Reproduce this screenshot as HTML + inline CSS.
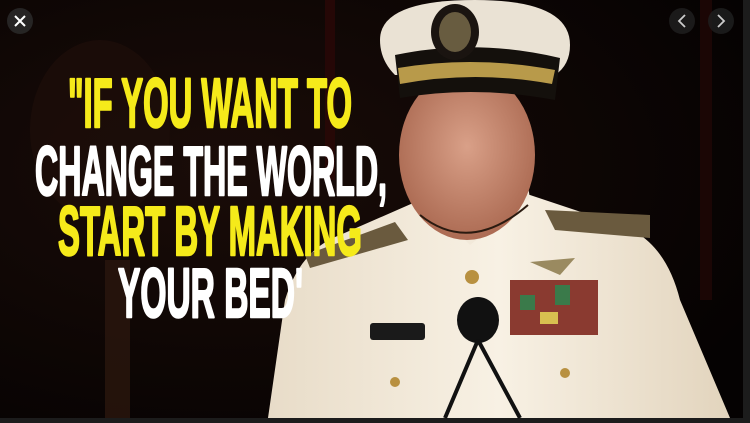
<!DOCTYPE html>
<html><head><meta charset="utf-8"><style>
html,body{margin:0;padding:0;background:#1c1c1c;width:750px;height:423px;overflow:hidden}
svg{display:block}
</style></head><body>
<svg width="750" height="423" viewBox="0 0 750 423">
<defs>
<radialGradient id="bg" cx="0.3" cy="0.4" r="0.8">
<stop offset="0" stop-color="#1a0c08"/><stop offset="1" stop-color="#050202"/>
</radialGradient>
<linearGradient id="uni" x1="0" x2="1">
<stop offset="0" stop-color="#e8dcc8"/><stop offset="0.5" stop-color="#f8f1e4"/><stop offset="1" stop-color="#e2d4bd"/>
</linearGradient>
<radialGradient id="face" cx="0.5" cy="0.45" r="0.6">
<stop offset="0" stop-color="#d9a088"/><stop offset="1" stop-color="#a8664e"/>
</radialGradient>
</defs>
<rect x="0" y="0" width="743" height="418" fill="url(#bg)"/>
<ellipse cx="100" cy="130" rx="70" ry="90" fill="#1e0e0a" opacity="0.7"/>
<rect x="325" y="0" width="10" height="180" fill="#2a0806" opacity="0.8"/>
<rect x="700" y="0" width="12" height="300" fill="#200706" opacity="0.8"/>
<rect x="105" y="260" width="25" height="158" fill="#2a160e" opacity="0.8"/>
<!-- uniform -->
<path d="M268 418 L285 300 Q300 250 340 235 L420 200 L530 195 L620 225 Q665 240 680 300 L730 418 Z" fill="url(#uni)"/>
<path d="M425 200 L470 245 L530 198 L525 170 L430 170 Z" fill="#f2e9da"/>
<ellipse cx="467" cy="155" rx="68" ry="85" fill="url(#face)"/>
<path d="M420 215 Q470 255 528 205" stroke="#2a1a10" stroke-width="2" fill="none"/>
<!-- cap -->
<path d="M380 40 Q380 0 475 0 Q570 0 570 45 Q570 65 555 75 L395 75 Q380 60 380 40 Z" fill="#eae2d4"/>
<path d="M395 55 Q475 38 560 58 L555 100 Q475 85 400 98 Z" fill="#14100c"/>
<path d="M398 68 Q475 55 555 70 L552 84 Q475 70 400 84 Z" fill="#b89a4a"/>
<ellipse cx="455" cy="32" rx="24" ry="28" fill="#1a1410"/>
<ellipse cx="455" cy="32" rx="16" ry="20" fill="#8a7a55" opacity="0.7"/>
<!-- shoulder boards -->
<path d="M305 255 L395 222 L408 240 L310 268 Z" fill="#6a5a3e"/>
<path d="M545 210 L650 215 L650 238 L555 230 Z" fill="#6a5a3e"/>
<rect x="510" y="280" width="88" height="55" fill="#8a3a30"/>
<rect x="520" y="295" width="15" height="15" fill="#3a7a4a"/><rect x="555" y="285" width="15" height="20" fill="#3a7a4a"/>
<rect x="540" y="312" width="18" height="12" fill="#d8c050"/>
<path d="M530 262 L575 258 L560 275 Z" fill="#9a8a60"/>
<rect x="370" y="323" width="55" height="17" rx="3" fill="#1a1a1a"/>
<ellipse cx="478" cy="320" rx="21" ry="23" fill="#111"/>
<path d="M478 340 L445 418 M478 340 L520 418" stroke="#111" stroke-width="4" fill="none"/>
<circle cx="472" cy="277" r="7" fill="#b89040"/>
<circle cx="395" cy="382" r="5" fill="#b89040"/><circle cx="565" cy="373" r="5" fill="#b89040"/>
<!-- text -->
<g font-family="Liberation Sans, sans-serif" font-weight="bold" font-size="70" stroke-width="2.5" stroke-linejoin="round">
<text x="68" y="127" textLength="284" lengthAdjust="spacingAndGlyphs" fill="#f5ea1a" stroke="#f5ea1a">"IF YOU WANT TO</text>
<text x="35" y="195" textLength="352" lengthAdjust="spacingAndGlyphs" fill="#ffffff" stroke="#ffffff">CHANGE THE WORLD,</text>
<text x="58" y="255" textLength="304" lengthAdjust="spacingAndGlyphs" fill="#f5ea1a" stroke="#f5ea1a">START BY MAKING</text>
<text x="118" y="317" textLength="185" lengthAdjust="spacingAndGlyphs" fill="#ffffff" stroke="#ffffff">YOUR BED'</text>
</g>
<circle cx="20" cy="21" r="13" fill="#2a2a2a" opacity="0.85"/>
<path d="M15 16 L25 26 M25 16 L15 26" stroke="#fff" stroke-width="2"/>
<circle cx="682" cy="21" r="13" fill="#1e1e1e" opacity="0.85"/>
<path d="M685 15 L679 21 L685 27" stroke="#ccc" stroke-width="1.8" fill="none"/>
<circle cx="721" cy="21" r="13" fill="#1e1e1e" opacity="0.85"/>
<path d="M718 15 L724 21 L718 27" stroke="#ccc" stroke-width="1.8" fill="none"/>
</svg>
</body></html>
